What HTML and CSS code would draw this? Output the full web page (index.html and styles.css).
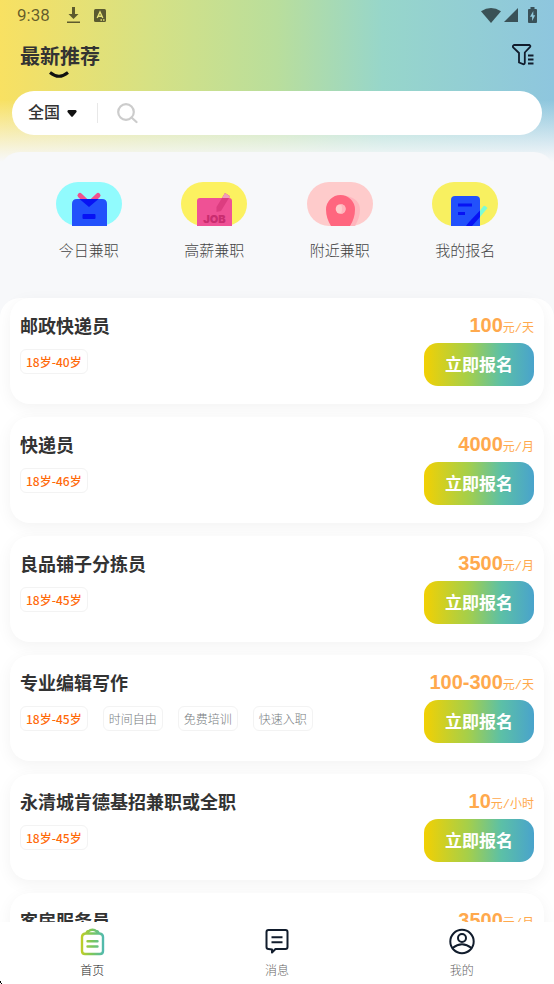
FILE: index.html
```html
<!DOCTYPE html>
<html lang="zh-CN">
<head>
<meta charset="utf-8">
<meta name="viewport" content="width=device-width, initial-scale=1">
<title>最新推荐</title>
<link rel="stylesheet" href="styles.css">
</head>
<body>
<div class="app">
  <header class="header">
    <div class="status">
      <span class="clock">9:38</span>
      <svg class="status-dl" width="13" height="17" viewBox="0 0 13 17"><path d="M5 0h3v7h3.500L6.500 12 1.500 7H5zM0 14.500h13V16H0z"/></svg>
      <svg class="status-a" width="12" height="13" viewBox="0 0 12 13"><rect width="12" height="13" rx="1.500"/><path class="cut" d="M3.200 9 6 3l2.800 6M4.200 7.200h3.600M6.500 11h1.500M9 11h1.500"/></svg>
      <span class="spacer"></span>
      <svg width="20" height="15" viewBox="0 0 20 15"><path d="M0 3.200Q10-3 20 3.200L10 15z"/></svg>
      <svg class="status-signal" width="14" height="14" viewBox="0 0 14 14"><path d="M14 0v14H0z"/></svg>
      <svg width="9" height="16" viewBox="0 0 9 16"><path fill-rule="evenodd" d="M2.500 0h4v2H8q1 0 1 1v12q0 1-1 1H1q-1 0-1-1V3q0-1 1-1h1.500zM5.300 4 2 9.700h2.100V14L7.200 8.200H5.300z"/></svg>
    </div>
    <div class="titlebar">
      <h1 class="title">最新推荐
        <svg class="smile" width="20" height="8" viewBox="0 0 20 8"><path d="M1 1.500Q10 9 19 1.500"/></svg>
      </h1>
      <button class="filter" aria-label="筛选">
        <svg width="22" height="22" viewBox="0 0 22 22"><path d="M2 1h15.500q1.500.8.400 2.200L12.800 8.500V19q-.2 1.500-1.700 1.200L7 18.500V9L1.200 3.500Q.2 2 2 1zM16 11.500h5.500M16 15.500h5.500M16 19.500h5.500"/></svg>
      </button>
    </div>
    <form class="search">
      <button type="button" class="region">全国<svg width="10" height="7" viewBox="0 0 10 7"><path d="M1.500 0h7Q10 .5 9.500 2L6 6.300q-1 1-2 0L.5 2Q0 .5 1.500 0z"/></svg></button>
      <label class="search-label" for="q"><svg width="21" height="21" viewBox="0 0 21 21"><circle cx="9" cy="9" r="7.800"/><path d="m14.500 14.500 5 4.500"/></svg></label>
      <input class="search-input" id="q" type="text" aria-label="搜索">
    </form>
  </header>

  <main class="main">
    <nav class="shortcuts">
      <a class="shortcut" href="#today">
        <svg width="66" height="44" viewBox="0 0 66 44"><rect width="66" height="44" rx="22" fill="#91fbfd"/><path d="M24 13.500 33 22l9-8.500" fill="none" stroke="#f0508e" stroke-width="5" stroke-linecap="round" stroke-linejoin="round"/><path d="M16 44V22q0-5 5-5h25q5 0 5 5v22z" fill="#2251fb"/><path d="M23.500 17h19L33 25z" fill="#0712f4"/><rect x="26.500" y="32" width="13" height="5" rx="1" fill="#0712f4"/></svg>
        <span>今日兼职</span>
      </a>
      <a class="shortcut" href="#salary">
        <svg width="66" height="44" viewBox="0 0 66 44"><rect width="66" height="44" rx="22" fill="#fcf160"/><path d="M16 44V19q0-3 3-3h29q3 0 3 3v25z" fill="#ef5195"/><path d="M44 11l5 3.200L40 29l-4.500 1V25z" fill="#dc3d80"/><path d="M44 11l5 3.200L47.800 16H41z" fill="#f09cb8"/><text class="job" x="33.500" y="41" text-anchor="middle">JOB</text></svg>
        <span>高薪兼职</span>
      </a>
      <a class="shortcut" href="#nearby">
        <svg width="66" height="44" viewBox="0 0 66 44"><rect width="66" height="44" rx="22" fill="#fecbcb"/><path d="M40 14q13 3 13 14 0 7-5 16H36z" fill="#ffb5bd"/><path d="M24 44q-5-8-5-16.500a14.500 14.500 0 0 1 29 0Q48 36 43 44z" fill="#ff667f"/><circle cx="33.500" cy="27" r="4.800" fill="#fecbcb"/><path d="M34 22.200a4.800 4.800 0 0 1 0 9.600q2-5 0-9.600z" fill="#ffb5bd"/></svg>
        <span>附近兼职</span>
      </a>
      <a class="shortcut" href="#applied">
        <svg width="66" height="44" viewBox="0 0 66 44"><rect width="66" height="44" rx="22" fill="#f8f060"/><path d="M19 44V18q0-4 4-4h21q4 0 4 4v26z" fill="#2251fb"/><path d="M48 28.500 51.500 24q1-1 4 2L48 35z" fill="#7cfbd5"/><path d="M48 28.500V35l-8 9h-6q2-3 4-5z" fill="#0712f4"/><path d="M26 23h14M26 31.500h7" stroke="#0712f4" stroke-width="3"/></svg>
        <span>我的报名</span>
      </a>
    </nav>

    <section class="jobs">
      <article class="job-card">
        <div class="info"><h2>邮政快递员</h2><div class="tags"><span class="tag age">18岁-40岁</span></div></div>
        <div class="side"><p class="pay">100<small>元/天</small></p><button class="apply">立即报名</button></div>
      </article>
      <article class="job-card">
        <div class="info"><h2>快递员</h2><div class="tags"><span class="tag age">18岁-46岁</span></div></div>
        <div class="side"><p class="pay">4000<small>元/月</small></p><button class="apply">立即报名</button></div>
      </article>
      <article class="job-card">
        <div class="info"><h2>良品铺子分拣员</h2><div class="tags"><span class="tag age">18岁-45岁</span></div></div>
        <div class="side"><p class="pay">3500<small>元/月</small></p><button class="apply">立即报名</button></div>
      </article>
      <article class="job-card">
        <div class="info"><h2>专业编辑写作</h2><div class="tags"><span class="tag age">18岁-45岁</span><span class="tag">时间自由</span><span class="tag">免费培训</span><span class="tag">快速入职</span></div></div>
        <div class="side"><p class="pay">100-300<small>元/天</small></p><button class="apply">立即报名</button></div>
      </article>
      <article class="job-card">
        <div class="info"><h2>永清城肯德基招兼职或全职</h2><div class="tags"><span class="tag age">18岁-45岁</span></div></div>
        <div class="side"><p class="pay">10<small>元/小时</small></p><button class="apply">立即报名</button></div>
      </article>
      <article class="job-card">
        <div class="info"><h2>客房服务员</h2></div>
        <div class="side"><p class="pay">3500<small>元/月</small></p></div>
      </article>
    </section>
  </main>

  <nav class="tabbar">
    <a class="tab active" href="#home">
      <svg width="26" height="28" viewBox="0 0 26 28"><defs><linearGradient id="g" gradientUnits="userSpaceOnUse" x1="1" y1="0" x2="25" y2="0"><stop offset="0" stop-color="#c8cf20"/><stop offset=".5" stop-color="#7cc75c"/><stop offset="1" stop-color="#4fb9b2"/></linearGradient></defs><g fill="none" stroke="url(#g)" stroke-width="2.400" stroke-linecap="round" stroke-linejoin="round"><path d="M6.500 5.500Q3 6 3 9v14q0 3 3 3h15q3 0 3-3V9q0-3-3.500-3.500zM7.500 5q.5-2 2.500-2 1-1.300 3.500-1.300T17 3q2 0 2.500 2M8.500 13.200l10 .01M8.500 18.500l10 .01"/></g></svg>
      <span>首页</span>
    </a>
    <a class="tab" href="#messages">
      <svg width="26" height="28" viewBox="0 0 26 28"><path class="line" d="M4.500 2h17q2 0 2 2v15q0 2-2 2H11.500L8 24.500V21.500L4.500 21q-2 0-2-2V4q0-2 2-2zM7.500 9.200h11M7.500 14.200h11"/></svg>
      <span>消息</span>
    </a>
    <a class="tab" href="#me">
      <svg width="26" height="28" viewBox="0 0 26 28"><circle class="line" cx="13" cy="13.500" r="11.700"/><circle class="line" cx="13" cy="10" r="4"/><path class="line" d="M3.500 20Q13 12.500 22.500 20"/></svg>
      <span>我的</span>
    </a>
    <svg class="corner" width="2" height="3" viewBox="0 0 2 3"><path d="M0 0h1v2H0zM1 2h1v1H1z"/></svg>
  </nav>
</div>
</body>
</html>
```
FILE: styles.css
```css
* { box-sizing: border-box; }

body {
  margin: 0;
  font-family: Roboto, "Noto Sans CJK SC", sans-serif;
  color: #333;
  background: #f7f8fa;
}

h1, h2, p { margin: 0; }
a { color: inherit; text-decoration: none; }
button { border: 0; padding: 0; background: none; font-family: inherit; color: inherit; }
svg { display: block; flex: none; }

.app {
  display: flex;
  flex-direction: column;
  height: 100vh;
}

.header {
  flex: none;
  padding: 0 12px 36px;
  background:
    linear-gradient(to bottom, rgba(247, 248, 250, 0) 100px, rgba(247, 248, 250, .85) 152px, #f7f8fa 162px),
    linear-gradient(to right, #f8e162 0, #f2e068 5%, #d6e184 27%, #b9de9c 50%, #97d6ca 69%, #8ec6de 100%);
}

.status {
  display: flex;
  align-items: center;
  height: 30px;
  padding: 0 5px;
  fill: currentColor;
  color: rgba(0, 0, 0, .6);
}
.clock { font-size: 17px; line-height: 30px; }
.status-dl { margin-left: 17px; }
.status-a { margin-left: 14px; }
.cut { fill: none; stroke: #e4e176; stroke-width: 1.4; }
.spacer { flex: 1; }
.status-signal { margin: 0 10px 0 3px; }

.titlebar {
  display: flex;
  align-items: center;
  justify-content: space-between;
  height: 50px;
  padding: 0 8px;
}
.title {
  position: relative;
  padding-top: 4px;
  font-size: 20px;
  line-height: 30px;
  font-weight: 700;
}
.smile {
  position: absolute;
  left: 29px;
  bottom: -7px;
  fill: none;
  stroke: #111;
  stroke-width: 3;
}
.filter svg { fill: none; stroke: #111c2c; stroke-width: 1.8; }

.search {
  display: flex;
  align-items: center;
  height: 44px;
  margin-top: 11px;
  padding-left: 16px;
  border-radius: 22px;
  background: #fff;
}
.region {
  display: flex;
  align-items: center;
  gap: 7px;
  padding-right: 20px;
  border-right: 1px solid #e8e8e8;
  font-size: 16px;
  line-height: 20px;
  font-weight: 500;
}
.region svg { fill: #111; }
.search-label { margin-left: 19px; }
.search-label svg { fill: none; stroke: #ccc; stroke-width: 2.2; stroke-linecap: round; }
.search-input {
  flex: 1;
  min-width: 0;
  margin: 0 20px 0 8px;
  border: 0;
  outline: 0;
  background: none;
  font: inherit;
}

.main {
  position: relative;
  flex: 1;
  min-height: 0;
  margin-top: -19px;
  border-radius: 20px 20px 0 0;
  background: #f7f8fa;
  overflow-y: auto;
  scrollbar-width: none;
}

.shortcuts {
  display: grid;
  grid-template-columns: repeat(4, 1fr);
  padding: 30px 26px 35px;
}
.shortcut {
  display: flex;
  flex-direction: column;
  align-items: center;
  gap: 13px;
  font-size: 15px;
  line-height: 24px;
  font-weight: 300;
  color: #444;
}
.job {
  font: 900 11px Inter, sans-serif;
  fill: #c92d70;
}

.jobs {
  display: flex;
  flex-direction: column;
  gap: 13px;
  padding: 0 10px 13px;
  border-radius: 20px 20px 0 0;
  background: #fff;
}
.job-card {
  display: flex;
  justify-content: space-between;
  min-height: 106px;
  padding: 13px 10px;
  border-radius: 20px;
  background: #fff;
  box-shadow: 0 4px 16px rgba(0, 0, 0, .05);
}
.job-card h2 {
  font-size: 18px;
  line-height: 32px;
  font-weight: 700;
}
.tags { display: flex; gap: 15px; margin-top: 6px; }
.tag {
  padding: 0 5px;
  border: 1px solid #f3f3f3;
  border-radius: 6px;
  font-family: "Noto Sans CJK SC", sans-serif;
  font-size: 12px;
  line-height: 23px;
  font-weight: 300;
  color: #777c80;
}
.age { font-weight: 500; color: #ff6a0a; }

.side {
  display: flex;
  flex-direction: column;
  align-items: flex-end;
}
.pay {
  height: 28px;
  font-family: "Liberation Sans", sans-serif;
  font-size: 20px;
  line-height: 28px;
  font-weight: 700;
  color: #ffa94d;
}
.pay small {
  font-family: "Liberation Mono", "Noto Sans CJK SC", monospace;
  font-size: 12px;
  font-weight: 400;
}
.apply {
  width: 110px;
  height: 43px;
  margin-top: 4px;
  border-radius: 14px;
  background: linear-gradient(to right, #f2d003 0, #a5cf4a 40%, #5cc0a6 70%, #49a3cc 100%);
  color: #fff;
  font-size: 17px;
  line-height: 44px;
  font-weight: 700;
}

.tabbar {
  position: relative;
  flex: none;
  display: grid;
  grid-template-columns: repeat(3, 1fr);
  height: 62px;
  padding-top: 6px;
  background: #fff;
}
.tab {
  display: flex;
  flex-direction: column;
  align-items: center;
  gap: 5px;
  font-size: 12px;
  line-height: 20px;
  font-weight: 300;
  color: #666;
}
.active { color: #222; }
.line { fill: none; stroke: #111c2c; stroke-width: 2; stroke-linejoin: round; }
.corner { position: absolute; left: 0; bottom: 0; }
```
